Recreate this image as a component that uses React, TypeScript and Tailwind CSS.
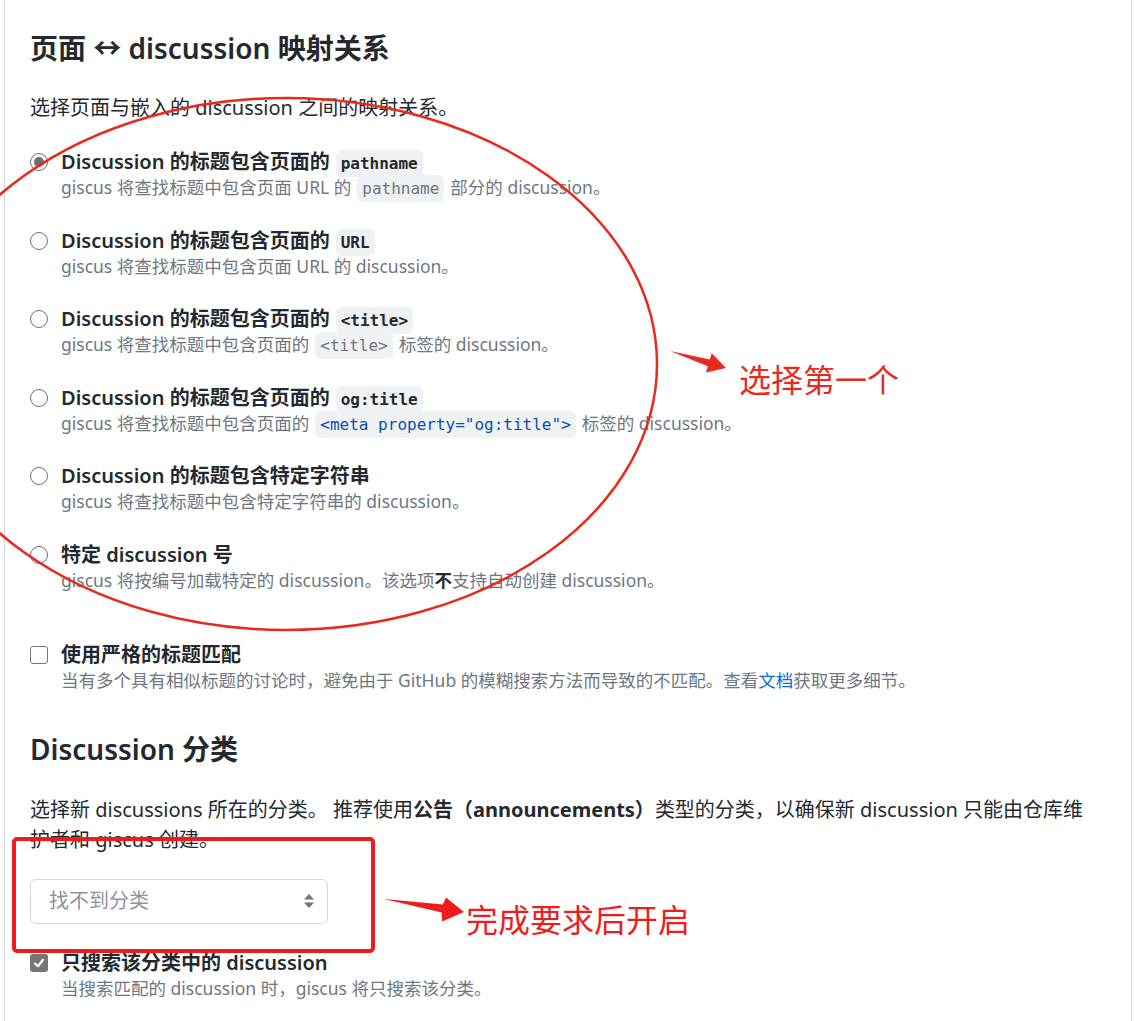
import React from 'react';

const sans = '"Noto Sans", "Noto Sans CJK SC", sans-serif';
const mono = '"DejaVu Sans Mono", "Liberation Mono", "Noto Sans CJK SC", monospace';

function Code({ children, strong, blue }: { children: React.ReactNode; strong?: boolean; blue?: boolean }) {
  return (
    <code
      style={{ fontFamily: mono }}
      className={`mx-[6px] rounded-md bg-[#eff1f3] px-[5px] py-[4px] text-[16px] leading-none ${strong ? 'font-bold text-[#24292f]' : ''} ${blue ? 'text-[#0550ae]' : ''}`}
    >
      {children}
    </code>
  );
}

function Radio({ checked }: { checked?: boolean }) {
  return (
    <span className="mt-[4px] flex h-[18px] w-[18px] shrink-0 items-center justify-center rounded-full border-[1.5px] border-[#6f6f6f] bg-white">
      {checked && <span className="h-[10px] w-[10px] rounded-full bg-[#6f6f6f]" />}
    </span>
  );
}

function Checkbox({ checked }: { checked?: boolean }) {
  if (checked) {
    return (
      <span className="mt-[4px] flex h-[18px] w-[18px] shrink-0 items-center justify-center rounded-[3px] bg-[#767676]">
        <svg width="12" height="12" viewBox="0 0 12 12" fill="none">
          <path d="M2 6.5 L5 9.2 L10 2.8" stroke="white" strokeWidth="2.2" strokeLinecap="round" strokeLinejoin="round" />
        </svg>
      </span>
    );
  }
  return <span className="mt-[4px] h-[18px] w-[18px] shrink-0 rounded-[3px] border-[1.5px] border-[#767676] bg-white" />;
}

function Option({ control, title, desc }: { control: React.ReactNode; title: React.ReactNode; desc: React.ReactNode }) {
  return (
    <div className="flex gap-[13px]">
      {control}
      <div className="flex flex-col">
        <div className="text-[20px] font-semibold leading-[26px] text-[#24292f]">{title}</div>
        <div className="text-[17.5px] leading-[24px] text-[#6e7781]">{desc}</div>
      </div>
    </div>
  );
}

export default function App() {
  const options = [
    {
      checked: true,
      title: <>Discussion 的标题包含页面的<Code strong>pathname</Code></>,
      desc: <>giscus 将查找标题中包含页面 URL 的<Code>pathname</Code>部分的 discussion。</>,
    },
    {
      title: <>Discussion 的标题包含页面的<Code strong>URL</Code></>,
      desc: <>giscus 将查找标题中包含页面 URL 的 discussion。</>,
    },
    {
      title: <>Discussion 的标题包含页面的<Code strong>&lt;title&gt;</Code></>,
      desc: <>giscus 将查找标题中包含页面的<Code>&lt;title&gt;</Code>标签的 discussion。</>,
    },
    {
      title: <>Discussion 的标题包含页面的<Code strong>og:title</Code></>,
      desc: <>giscus 将查找标题中包含页面的<Code blue>&lt;meta property="og:title"&gt;</Code>标签的 discussion。</>,
    },
    {
      title: <>Discussion 的标题包含特定字符串</>,
      desc: <>giscus 将查找标题中包含特定字符串的 discussion。</>,
    },
    {
      title: <>特定 discussion 号</>,
      desc: <>giscus 将按编号加载特定的 discussion。该选项<b className="text-[#24292f]">不</b>支持自动创建 discussion。</>,
    },
  ];

  return (
    <div className="relative min-h-[1021px] w-[1134px] overflow-hidden bg-white" style={{ fontFamily: sans }}>
      <div className="ml-[4px] min-h-[1021px] w-[1128px] border-x border-[#d0d7de] pl-[25px] pt-[30.5px]">
        <h2 className="text-[28px] font-semibold leading-[35px] text-[#24292f]">页面 ↔ discussion 映射关系</h2>
        <p className="mt-[27.5px] text-[20px] leading-[30px] text-[#24292f]">选择页面与嵌入的 discussion 之间的映射关系。</p>

        <div className="mt-[26px] flex flex-col gap-[28.6px]">
          {options.map((o, i) => (
            <Option key={i} control={<Radio checked={o.checked} />} title={o.title} desc={o.desc} />
          ))}
        </div>

        <div className="mt-[50px]">
          <Option
            control={<Checkbox />}
            title="使用严格的标题匹配"
            desc={<>当有多个具有相似标题的讨论时，避免由于 GitHub 的模糊搜索方法而导致的不匹配。查看<span className="text-[#0969da]">文档</span>获取更多细节。</>}
          />
        </div>

        <h2 className="mt-[40.5px] text-[28px] font-semibold leading-[35px] text-[#24292f]">Discussion 分类</h2>
        <p className="mt-[27.5px] text-[20px] leading-[30px] text-[#24292f]">
          选择新 discussions 所在的分类。 推荐使用<b>公告（announcements）</b>类型的分类，以确保新 discussion 只能由仓库维<br />护者和 giscus 创建。
        </p>

        <div className="mt-[24px] flex h-[45px] w-[298px] items-center justify-between rounded-md border border-[#d0d7de] bg-white pl-[18px] pr-[12px] text-[20px] text-[#8c959f]">
          <span>找不到分类</span>
          <svg width="12" height="18" viewBox="0 0 12 18">
            <path d="M6 2 L11 7.5 L1 7.5 Z" fill="#6e7781" />
            <path d="M6 16 L11 10.5 L1 10.5 Z" fill="#6e7781" />
          </svg>
        </div>

        <div className="mt-[26px]">
          <Option control={<Checkbox checked />} title="只搜索该分类中的 discussion" desc="当搜索匹配的 discussion 时，giscus 将只搜索该分类。" />
        </div>
      </div>

      {/* annotations */}
      <svg className="pointer-events-none absolute left-0 top-0" width="1134" height="1021" viewBox="0 0 1134 1021">
        <ellipse cx="286" cy="364" rx="371" ry="266" fill="none" stroke="#e8291c" strokeWidth="2.5" />
        <polygon points="670,351 709.8,359.5 711.7,353.2 726,368 705.9,372.4 707.8,366.2" fill="#e8291c" />
        <rect x="14" y="839" width="359" height="112" rx="3" fill="none" stroke="#f01c1c" strokeWidth="4" />
        <polygon points="384,899 442.9,904.6 446,897.6 464,912 442,921.4 441.7,912.4" fill="#f01c1c" />
      </svg>
      <div className="pointer-events-none absolute left-[739px] top-[359px] text-[32px] leading-[42px] text-[#e8291c]">选择第一个</div>
      <div className="pointer-events-none absolute left-[466px] top-[899px] text-[32px] leading-[42px] text-[#f01c1c]">完成要求后开启</div>
    </div>
  );
}
